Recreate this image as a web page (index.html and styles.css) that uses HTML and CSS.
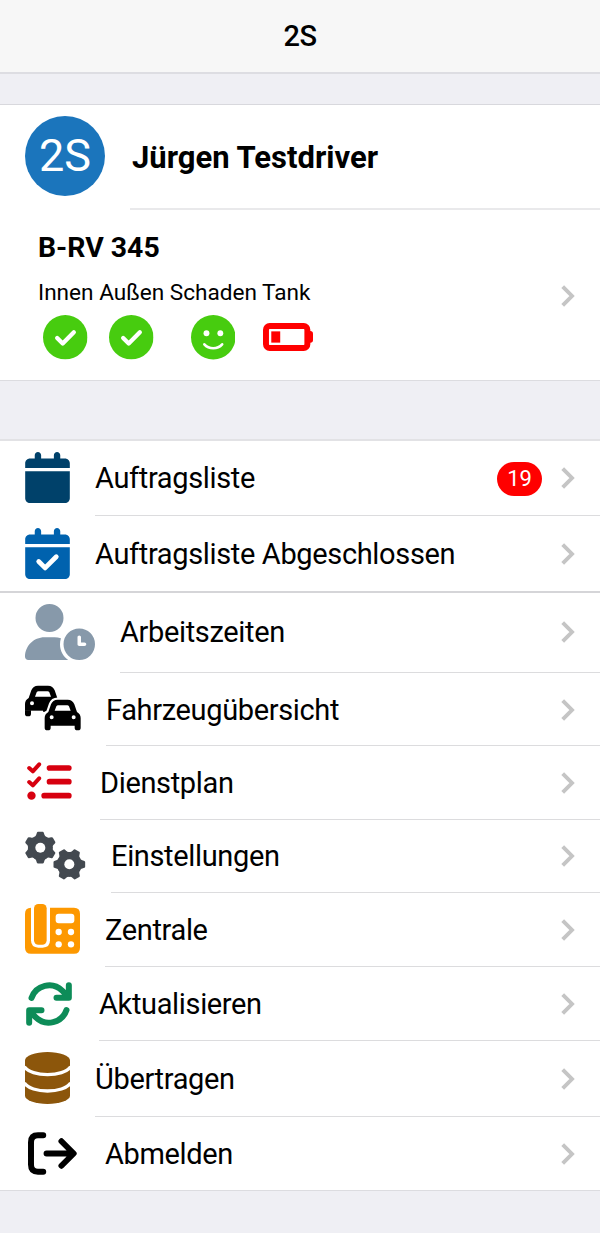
FILE: index.html
```
<!DOCTYPE html>
<html lang="de">
<head>
<meta charset="utf-8">
<title>2S</title>
<link rel="stylesheet" href="styles.css">
</head>
<body>
<svg class="defs" aria-hidden="true">
  <symbol id="chevron" viewBox="0 0 14 22"><path d="M1.7 1.6 11 11l-9.300 9.400" fill="none" stroke="#c5c5c5" stroke-width="3.900"/></symbol>
  <symbol id="ok" viewBox="0 0 44 44"><circle cx="22" cy="22" r="22" fill="#47cc0f"/><path d="M14 22.700l5.500 5.500L30.500 17" fill="none" stroke="#fff" stroke-width="4.200" stroke-linecap="round" stroke-linejoin="round"/></symbol>
  <g id="tooth"><path d="M-17-29Q-10-32-9-38L-7-44H7L9-38Q10-32 17-29Z"/></g>
  <g id="gear"><circle r="31"/><use href="#tooth"/><use href="#tooth" transform="rotate(60)"/><use href="#tooth" transform="rotate(120)"/><use href="#tooth" transform="rotate(180)"/><use href="#tooth" transform="rotate(240)"/><use href="#tooth" transform="rotate(300)"/></g>
</svg>
<header class="navbar">2S</header>
<main>
  <section class="profile">
    <div class="driver">
      <div class="avatar">2S</div>
      <div class="driver-name"><span>Jürgen Testdriver</span></div>
    </div>
    <div class="vehicle">
      <div class="vehicle-info">
        <div class="plate">B-RV 345</div>
        <div class="labels">Innen Außen Schaden Tank</div>
        <div class="states">
          <svg class="state"><use href="#ok"/></svg>
          <svg class="state outside"><use href="#ok"/></svg>
          <svg class="state damage" viewBox="0 0 44 44"><circle cx="22" cy="22" r="22" fill="#47cc0f"/><circle cx="15.300" cy="18" r="2.900" fill="#fff"/><circle cx="29" cy="18" r="2.900" fill="#fff"/><path d="M13.200 29c4.500 5.200 13.100 5.200 17.600 0" fill="none" stroke="#fff" stroke-width="2.600" stroke-linecap="round"/></svg>
          <svg class="battery" viewBox="788 309 151 84"><path d="M925 333h6q8 0 8 8v19q0 8-8 8h-6z" fill="#f00"/><rect x="797" y="318" width="125" height="66" rx="11" fill="#fff" stroke="#f00" stroke-width="18"/><path d="M813 334h27v34h-27z" fill="#f00"/></svg>
        </div>
      </div>
      <svg class="chevron"><use href="#chevron"/></svg>
    </div>
  </section>

  <section class="menu">
    <div class="row orders">
      <svg class="icon" viewBox="0 0 448 512" fill="#00416a"><path d="M96 32V64H48C21.500 64 0 85.500 0 112v48H448V112c0-26.500-21.500-48-48-48H352V32c0-17.700-14.300-32-32-32s-32 14.300-32 32V64H160V32c0-17.700-14.300-32-32-32S96 14.300 96 32zM448 192H0V464c0 26.500 21.500 48 48 48H400c26.500 0 48-21.500 48-48V192z"/></svg>
      <div class="body"><span>Auftragsliste</span><b class="badge">19</b><svg class="chevron"><use href="#chevron"/></svg></div>
    </div>
    <div class="row done">
      <svg class="icon" viewBox="0 0 448 512" fill="#0062ae"><path d="M96 32V64H48C21.500 64 0 85.500 0 112v48H448V112c0-26.500-21.500-48-48-48H352V32c0-17.700-14.300-32-32-32s-32 14.300-32 32V64H160V32c0-17.700-14.300-32-32-32S96 14.300 96 32zM448 192H0V464c0 26.500 21.500 48 48 48H400c26.500 0 48-21.500 48-48V192z"/><path d="M136 336l64 64 112-112" fill="none" stroke="#fff" stroke-width="48" stroke-linecap="round" stroke-linejoin="round"/></svg>
      <div class="body"><span>Auftragsliste Abgeschlossen</span><svg class="chevron"><use href="#chevron"/></svg></div>
    </div>
    <div class="row hours">
      <svg class="icon" viewBox="0 0 640 512" fill="#8799aa"><path d="M224 0a128 128 0 1 1 0 256A128 128 0 1 1 224 0zM178.300 304h91.400c20.600 0 40.400 3.500 58.800 9.900C323 331 320 349.100 320 368c0 59.500 29.500 112.100 74.800 144H29.700C13.300 512 0 498.700 0 482.300C0 383.800 79.800 304 178.300 304zM352 368a144 144 0 1 1 288 0 144 144 0 1 1 -288 0zm144-80c-8.800 0-16 7.200-16 16v64c0 8.800 7.200 16 16 16h48c8.800 0 16-7.200 16-16s-7.200-16-16-16H512V304c0-8.800-7.200-16-16-16z"/></svg>
      <div class="body"><span>Arbeitszeiten</span><svg class="chevron"><use href="#chevron"/></svg></div>
    </div>
    <div class="row fleet">
      <svg class="icon" viewBox="75 285 168 138">
        <defs><g id="car"><path fill-rule="evenodd" d="M11 37 19 14Q24 0 39 0H69Q84 0 89 14L97 37Q108 43 108 55V84Q108 92 100 92H98Q90 92 90 84V78H18V84Q18 92 10 92H8Q0 92 0 84V55Q0 43 11 37ZM30 33H78L73 20Q71 17 68 17H40Q37 17 35 20ZM21 47a6 6 0 1 0 0 12a6 6 0 1 0 0-12ZM87 47a6 6 0 1 0 0 12a6 6 0 1 0 0-12Z"/></g></defs>
        <use href="#car" x="75" y="287"/>
        <use href="#car" x="134" y="329" stroke="#fff" stroke-width="13" stroke-linejoin="round"/>
        <path d="M171 344h35l8 19h-50z" fill="#fff"/>
        <path d="M129 363v60h-54v-61h54z" fill="#fff"/>
        <path d="M75 361h18v10q0 8-8 8h-2q-8 0-8-8z"/>
        <use href="#car" x="134" y="329"/>
      </svg>
      <div class="body"><span>Fahrzeugübersicht</span><svg class="chevron"><use href="#chevron"/></svg></div>
    </div>
    <div class="row roster">
      <svg class="icon" viewBox="83 50 134 114" fill="none" stroke="#d7000f" stroke-linecap="round" stroke-linejoin="round"><path stroke-width="17" d="M150 68h58M150 109h58M134 151h74"/><path stroke-width="12" d="M89 68l11 10 19-21M89 110l11 10 19-21"/><circle cx="96" cy="151" r="12.500" fill="#d7000f" stroke="none"/></svg>
      <div class="body"><span>Dienstplan</span><svg class="chevron"><use href="#chevron"/></svg></div>
    </div>
    <div class="row settings">
      <svg class="icon" viewBox="75 258 183 147" fill="#434950" stroke="#434950" stroke-width="7" stroke-linejoin="round"><use href="#gear" x="121" y="308"/><use href="#gear" transform="translate(208 358) rotate(30)"/><g fill="#fff" stroke="none"><circle cx="121" cy="308" r="15"/><circle cx="208" cy="358" r="15"/></g></svg>
      <div class="body"><span>Einstellungen</span><svg class="chevron"><use href="#chevron"/></svg></div>
    </div>
    <div class="row office">
      <svg class="icon" viewBox="75 42 165 150" fill="#fd9800"><path d="M93 53H222Q240 53 240 71V173Q240 191 222 191H93Q75 191 75 173V71Q75 53 93 53Z"/><path d="M93 42V151Q93 173 115 173H128Q150 173 150 151V42Z" fill="#fff"/><rect x="102" y="42" width="38" height="122" rx="13"/><g fill="#fff"><rect x="167" y="71" width="56" height="29" rx="9"/><circle cx="176" cy="126" r="9.500"/><circle cx="213" cy="126" r="9.500"/><circle cx="176" cy="163" r="9.500"/><circle cx="213" cy="163" r="9.500"/></g></svg>
      <div class="body"><span>Zentrale</span><svg class="chevron"><use href="#chevron"/></svg></div>
    </div>
    <div class="row refresh">
      <svg class="icon" viewBox="80 273 137 132" fill="none" stroke="#0d8c58" stroke-width="18" stroke-linecap="round" stroke-linejoin="round"><path d="M96 321A56 56 0 0 1 188 299L206 317M208 283v37h-37M201 357A56 56 0 0 1 109 379L91 361M89 395v-37h37"/></svg>
      <div class="body"><span>Aktualisieren</span><svg class="chevron"><use href="#chevron"/></svg></div>
    </div>
    <div class="row transfer">
      <svg class="icon" viewBox="75 51 135 156" fill="#8c560b"><path d="M75 76A67.500 25 0 0 1 210 76V182A67.500 25 0 0 1 75 182Z"/><path d="M73 95C94 127 191 127 212 95M73 144C94 176 191 176 212 144" fill="none" stroke="#fff" stroke-width="10"/></svg>
      <div class="body"><span>Übertragen</span><svg class="chevron"><use href="#chevron"/></svg></div>
    </div>
    <div class="row logout">
      <svg class="icon" viewBox="84 289 148 130" fill="none" stroke="#000" stroke-width="18" stroke-linecap="round" stroke-linejoin="round"><path d="M130 299h-16q-21 0-21 21v68q0 21 21 21h16M140 354h80M185 317l37 37-37 37"/></svg>
      <div class="body"><span>Abmelden</span><svg class="chevron"><use href="#chevron"/></svg></div>
    </div>
  </section>
</main>
</body>
</html>
```
FILE: styles.css
```
* { box-sizing: border-box; }
body { margin: 0; min-height: 1233px; background: #efeff4; color: #000; font-family: Roboto, sans-serif; font-size: 29px; }
svg { display: block; flex: none; }
.defs { width: 0; height: 0; float: left; }
.navbar { height: 74px; padding-bottom: 1px; display: flex; align-items: center; justify-content: center; background: #f7f7f7; border-bottom: 2px solid #dddde2; font-size: 29px; font-weight: 500; letter-spacing: -0.5px; }
main { padding-top: 30px; }
.profile { height: 277px; background: #fff; border-top: 1px solid #d8d8dd; border-bottom: 1px solid #dcdce0; }
.driver { display: flex; height: 105px; padding-left: 25px; }
.avatar { width: 80px; height: 80px; margin-top: 11px; padding-bottom: 2px; border-radius: 50%; background: #1b75bc; color: #fff; font-size: 45px; display: flex; align-items: center; justify-content: center; }
.driver-name { margin-left: 25px; padding: 1px 0 0 2px; flex: 1; display: flex; align-items: center; border-bottom: 2px solid #e9e9eb; font-size: 31px; font-weight: 700; }
.vehicle { display: flex; justify-content: space-between; align-items: center; height: 171px; padding: 0 25px 0 38px; }
.vehicle-info { height: 171px; padding-top: 19px; }
.plate { font-size: 28.400px; line-height: 38px; font-weight: 700; }
.labels { margin-top: 11px; font-size: 22.600px; line-height: 30px; white-space: nowrap; }
.states { display: flex; align-items: center; margin: 7px 0 0 5px; }
.state { width: 44.500px; height: 44.500px; }
.outside { margin-left: 21.500px; }
.damage { margin-left: 37px; }
.battery { width: 50px; height: 28px; margin-left: 27.500px; }
.chevron { width: 14px; height: 22px; }
.menu { margin-top: 58px; background: #fff; border-top: 2px solid #e2e2e5; border-bottom: 1px solid #dcdce0; }
.row { display: flex; align-items: center; padding-left: 25px; height: 74px; letter-spacing: -0.350px; }
.icon { margin-bottom: 3px; }
.body { margin-left: auto; height: 100%; padding-right: 25px; display: flex; align-items: center; border-bottom: 1px solid #dcdcde; white-space: nowrap; }
.body > span { flex: 1; }
.badge { width: 45px; height: 34px; margin: 1px 19px 0 0; border-radius: 17px; background: #f00; color: #fff; font-size: 22px; font-weight: 400; letter-spacing: 0; display: flex; align-items: center; justify-content: center; }
.orders { height: 75px; }
.orders .icon, .done .icon { width: 45px; height: 51px; }
.orders .body, .done .body, .transfer .body { width: 505px; }
.done { height: 77px; border-bottom: 2px solid #d5d5d8; }
.done .icon { margin-bottom: 1px; }
.done .body { border-bottom: 0; }
.hours { height: 80px; }
.hours .icon { width: 70px; height: 56px; }
.hours .body { width: 480px; padding-bottom: 1px; }
.fleet { height: 73px; }
.fleet .icon { width: 56px; height: 46px; margin-bottom: 3px; }
.fleet .body { width: 494px; padding-top: 1px; }
.roster { padding-left: 27px; }
.roster .icon { width: 45px; height: 38px; margin-bottom: 4px; }
.roster .body { width: 500px; }
.settings { height: 73px; }
.settings .icon { width: 61px; height: 49px; margin-bottom: 2px; }
.settings .body { width: 489px; }
.office .icon { width: 55px; height: 50px; margin-bottom: 2px; }
.office .body { width: 495px; }
.refresh { padding-left: 26px; }
.refresh .icon { width: 46px; height: 44px; margin-bottom: 1px; }
.refresh .body { width: 501px; }
.transfer { height: 76px; }
.transfer .icon { width: 45px; height: 52px; margin-bottom: 2px; }
.logout { padding-left: 28px; height: 73px; }
.logout .icon { width: 49px; height: 43px; margin-bottom: 1px; }
.logout .body { width: 495px; border-bottom: 0; }
```
